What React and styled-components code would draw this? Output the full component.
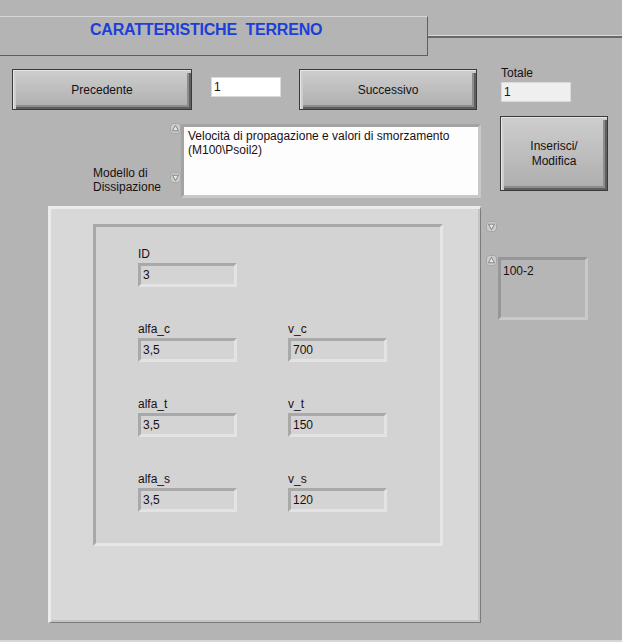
import React from 'react';
import styled, { createGlobalStyle } from 'styled-components';

const GlobalStyle = createGlobalStyle`
	html, body {
		margin: 0;
		padding: 0;
		background: #b4b4b4;
	}
`;

const Page = styled.div`
	width: 622px;
	height: 642px;
	overflow: hidden;
	background: #b4b4b4;
	display: flex;
	flex-direction: column;
	font-family: 'Liberation Sans', Arial, sans-serif;
	font-size: 12px;
	color: #1a1012;
`;

const HeaderRow = styled.div`
	display: flex;
	margin-top: 16px;
`;

const TitleBox = styled.div`
	width: 428px;
	height: 40px;
	box-sizing: border-box;
	border-top: 1px solid #d6d6d6;
	border-right: 1px solid #5e5e5e;
	border-bottom: 1px solid #5e5e5e;
	padding: 3px 0 0 90px;
	font-size: 16px;
	line-height: 20px;
	font-weight: bold;
	letter-spacing: -0.2px;
	color: #1b3fd8;
	white-space: pre;
`;

const TitleRule = styled.div`
	flex: 1;
	margin-top: 19px;
	height: 0;
	border-top: 1px solid #d8d8d8;
	border-bottom: 2px solid #686868;
`;

const NavRow = styled.div`
	display: flex;
	align-items: flex-start;
	margin-top: 13px;
	padding-left: 12px;
`;

const Button = styled.div`
	width: ${(props) => props.width || '179px'};
	height: ${(props) => props.height || '41px'};
	margin-left: ${(props) => props.ml || '0'};
	box-sizing: border-box;
	border: 1px solid #3a3a3a;
	background: linear-gradient(#cecece, #bcbcbc 55%, #adadad);
	box-shadow: inset 1px 1px 0 #e4e4e4, inset 3px 3px 0 #cdcdcd,
		inset -2px -2px 0 #5f5f5f, inset -4px -4px 0 #8c8c8c;
	display: flex;
	align-items: center;
	justify-content: center;
	text-align: center;
	line-height: 15px;
	padding-top: 1px;
	color: #141014;
`;

const NumBox = styled.div`
	width: ${(props) => props.width || '70px'};
	height: 20px;
	margin-left: ${(props) => props.ml || '0'};
	margin-top: ${(props) => props.mt || '0'};
	box-sizing: border-box;
	background: ${(props) => props.bg || '#ffffff'};
	border: 1px solid #dadada;
	padding-left: 2px;
	line-height: 18px;
	color: #2a0a14;
`;

const TotaleGroup = styled.div`
	display: flex;
	flex-direction: column;
	margin-left: 24px;
	margin-top: -3px;
	line-height: 14px;
`;

const ModelRow = styled.div`
	display: flex;
	align-items: flex-start;
	height: 82px;
	margin-top: 6px;
	padding-left: 93px;
`;

const ModelLabel = styled.div`
	align-self: flex-end;
	width: 77px;
	line-height: 14px;
	margin-bottom: 4px;
`;

const ArrowColumn = styled.div`
	display: flex;
	flex-direction: column;
	justify-content: space-between;
	width: 11px;
	height: ${(props) => props.height || '60px'};
	margin-top: ${(props) => props.mt || '0'};
`;

const TextFrame = styled.div`
	width: 300px;
	height: 74px;
	margin-top: 8px;
	box-sizing: border-box;
	border: 3px solid;
	border-color: #a3a3a3 #c8c8c8 #c9c9c9 #a3a3a3;
	background: #fdfdfd;
	padding: 2px 0 0 4px;
	line-height: 14px;
`;

const MainRow = styled.div`
	display: flex;
	align-items: flex-start;
	margin-top: 8px;
	padding-left: 48px;
`;

const OuterPanel = styled.div`
	width: 433px;
	height: 417px;
	box-sizing: border-box;
	background: #d8d8d8;
	border-top: 3px solid #ebebeb;
	border-left: 3px solid #ebebeb;
	border-right: 1px solid #7c7c7c;
	border-bottom: 1px solid #7c7c7c;
	box-shadow: inset -2px -2px 0 #c4c4c4;
	padding: 15px 0 0 42px;
`;

const InnerPanel = styled.div`
	width: 350px;
	height: 322px;
	box-sizing: border-box;
	background: #d3d3d3;
	border: 3px solid;
	border-color: #a8a8a8 #e6e6e6 #e6e6e6 #a8a8a8;
	padding: 20px 0 0 42px;
`;

const FieldGrid = styled.div`
	display: grid;
	grid-template-columns: 99px 99px;
	column-gap: 51px;
	row-gap: 35px;
`;

const Cell = styled.div`
	display: flex;
	flex-direction: column;
	line-height: 14px;
`;

const Field = styled.div`
	height: 24px;
	margin-top: 2px;
	box-sizing: border-box;
	border: 3px solid;
	border-color: #a9a9a9 #e3e3e3 #e3e3e3 #a9a9a9;
	background: #d4d4d4;
	padding-left: 2px;
	line-height: 18px;
`;

const SideColumn = styled.div`
	display: flex;
	flex-direction: column;
	margin-left: 5px;
	padding-top: 15px;
`;

const ListRow = styled.div`
	display: flex;
	align-items: flex-start;
	margin-top: 23px;
`;

const ListBox = styled.div`
	width: 90px;
	height: 63px;
	margin: 2px 0 0 1px;
	box-sizing: border-box;
	border: 3px solid;
	border-color: #979797 #c9c9c9 #c9c9c9 #979797;
	background: #b6b6b6;
	padding: 4px 0 0 2px;
	line-height: 14px;
`;

const BottomLine = styled.div`
	margin-top: 17px;
	height: 2px;
	background: #d6d6d6;
`;

const Arrow = ({ down }) => (
	<svg width="11" height="11" viewBox="0 0 11 11">
		<rect x="0.5" y="0.5" width="10" height="10" rx="3" fill="#cbcbcb" stroke="#a4a4a4" />
		<path
			d={down ? 'M2.5 3.2 L5.5 8.6 L8.5 3.2 Z' : 'M2.5 7.8 L5.5 2.4 L8.5 7.8 Z'}
			fill="#e8e8e8"
			stroke="#7a7a7a"
			strokeWidth="0.9"
			strokeLinejoin="round"
		/>
	</svg>
);

const fields = [
	{ label: 'ID', value: '3' },
	null,
	{ label: 'alfa_c', value: '3,5' },
	{ label: 'v_c', value: '700' },
	{ label: 'alfa_t', value: '3,5' },
	{ label: 'v_t', value: '150' },
	{ label: 'alfa_s', value: '3,5' },
	{ label: 'v_s', value: '120' },
];

export default function App() {
	return (
		<Page>
			<GlobalStyle />
			<HeaderRow>
				<TitleBox>{'CARATTERISTICHE  TERRENO'}</TitleBox>
				<TitleRule />
			</HeaderRow>

			<NavRow>
				<Button width="180px">Precedente</Button>
				<NumBox ml="19px" mt="8px">1</NumBox>
				<Button ml="18px" width="178px">Successivo</Button>
				<TotaleGroup>
					<span>Totale</span>
					<NumBox mt="2px" bg="#efefef">1</NumBox>
				</TotaleGroup>
			</NavRow>

			<ModelRow>
				<ModelLabel>
					Modello di
					<br />
					Dissipazione
				</ModelLabel>
				<ArrowColumn mt="7px">
					<Arrow />
					<Arrow down />
				</ArrowColumn>
				<TextFrame>
					Velocità di propagazione e valori di smorzamento
					<br />
					(M100\Psoil2)
				</TextFrame>
				<Button ml="19px" width="108px" height="75px">
					Inserisci/
					<br />
					Modifica
				</Button>
			</ModelRow>

			<MainRow>
				<OuterPanel>
					<InnerPanel>
						<FieldGrid>
							{fields.map((f, i) =>
								f ? (
									<Cell key={i}>
										<span>{f.label}</span>
										<Field>{f.value}</Field>
									</Cell>
								) : (
									<div key={i} />
								)
							)}
						</FieldGrid>
					</InnerPanel>
				</OuterPanel>
				<SideColumn>
					<Arrow down />
					<ListRow>
						<Arrow />
						<ListBox>100-2</ListBox>
					</ListRow>
				</SideColumn>
			</MainRow>

			<BottomLine />
		</Page>
	);
}
